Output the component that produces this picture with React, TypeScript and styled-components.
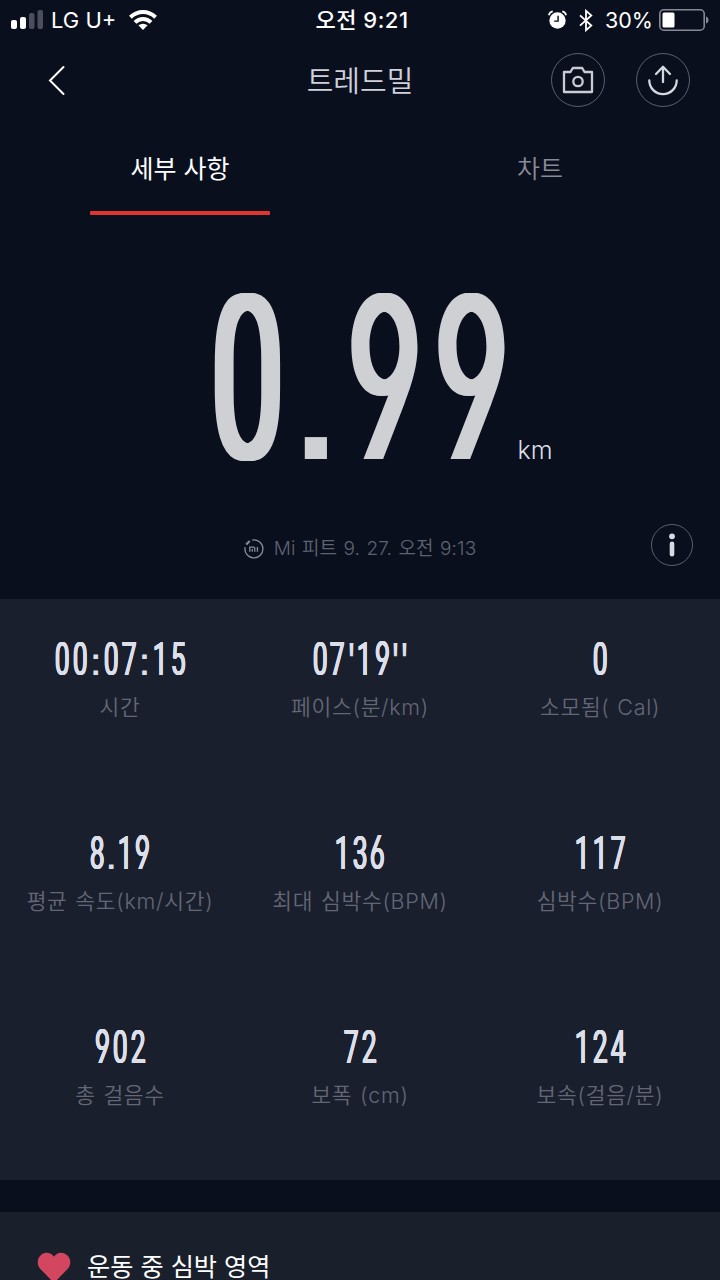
import React from "react";
import styled, { createGlobalStyle, css } from "styled-components";

const GlobalStyle = createGlobalStyle`
  html, body { margin: 0; padding: 0; background: #0a0f1e; }
  * { box-sizing: border-box; }
`;

const sans = `Inter, "Noto Sans CJK KR", sans-serif`;

const Screen = styled.div`
  width: 720px;
  height: 1280px;
  overflow: hidden;
  display: flex;
  flex-direction: column;
  background: #0a0f1e;
  color: #fff;
  font-family: ${sans};
  white-space: nowrap;
`;

const StatusBar = styled.div`
  height: 40px;
  flex: none;
  display: grid;
  grid-template-columns: 1fr auto 1fr;
  align-items: center;
  padding: 0 11px;
`;

const StatusSide = styled.div<{ $end?: boolean }>`
  display: flex;
  align-items: center;
  justify-content: ${(p) => (p.$end ? "flex-end" : "flex-start")};
  gap: ${(p) => (p.$end ? "12px" : "0")};
  line-height: 40px;
`;

const Carrier = styled.span`
  margin: 0 13px 0 7px;
  font-size: 22px;
`;

const Clock = styled.span`
  font-size: 22px;
  font-weight: 550;
  line-height: 38px;
  letter-spacing: 0.5px;
  margin-left: 4px;
`;

const Percent = styled.span`
  margin-right: -6px;
  font-size: 21.5px;
`;

const Header = styled.header`
  height: 80px;
  flex: none;
  display: grid;
  grid-template-columns: 1fr auto 1fr;
  align-items: center;
  padding: 0 30px 0 47px;
`;

const Title = styled.h1`
  margin: 4px 0 0 -17px;
  font-size: 29px;
  font-weight: 350;
  line-height: 40px;
  color: #cfd2dc;
`;

const Actions = styled.div`
  display: flex;
  justify-content: flex-end;
  gap: 31px;
`;

const RoundButton = styled.button<{ $size: number }>`
  width: ${(p) => p.$size}px;
  height: ${(p) => p.$size}px;
  border: 1.5px solid #5b5f6d;
  border-radius: 50%;
  background: none;
  padding: 0;
  display: flex;
  align-items: center;
  justify-content: center;
`;

const Tabs = styled.nav`
  height: 95px;
  flex: none;
  display: grid;
  grid-template-columns: 1fr 1fr;
`;

const Tab = styled.div<{ $active?: boolean }>`
  display: flex;
  flex-direction: column;
  align-items: center;
  justify-content: space-between;
  padding-top: 27px;
  font-size: 25px;
  line-height: 44px;
  font-weight: ${(p) => (p.$active ? 400 : 350)};
  color: ${(p) => (p.$active ? "#fff" : "#888b97")};
  &::after {
    content: "";
    width: 180px;
    height: 4px;
    border-radius: 1px;
    background: ${(p) => (p.$active ? "#df352e" : "transparent")};
  }
`;

const Hero = styled.section`
  height: 384px;
  flex: none;
  display: flex;
  flex-direction: column;
`;

const Distance = styled.div`
  height: 300px;
  display: flex;
  align-items: flex-start;
  padding: 65px 0 0 204px;
`;

const Readout = styled.div<{ $big?: boolean }>`
  display: flex;
  align-items: baseline;
  justify-content: center;
  font-family: Inter, sans-serif;
  font-size: ${(p) => (p.$big ? 225 : 46)}px;
  line-height: ${(p) => (p.$big ? 194 : 48)}px;
  height: ${(p) => (p.$big ? 194 : 48)}px;
  color: ${(p) => (p.$big ? "#cfd0d4" : "#dddfe8")};
  &::before {
    content: "\\200b";
    width: 0;
  }
`;

type GlyphKind = "round" | "open" | "point" | "quote";

const advances: Record<string, number> = { ".": 0.222, ":": 0.29, "'": 0.195 };

const Cell = styled.span<{ $advance: number }>`
  display: flex;
  justify-content: center;
  width: ${(p) => p.$advance}em;
`;

const thicken = (reach: number) =>
  [-1, -0.66, -0.33, 0.33, 0.66, 1]
    .map((k) => `${(k * reach).toFixed(4)}em 0 0 currentColor`)
    .join(", ");

const glyphStyles = {
  round: css`
    font-family: Roboto, sans-serif;
    font-size: 1.02em;
    font-weight: 400;
    transform: scaleX(0.565);
  `,
  open: css`
    font-weight: 400;
    font-feature-settings: "cv03", "cv04";
    transform: scaleX(0.57);
  `,
  point: css`
    font-size: 0.86em;
    font-weight: 400;
    font-feature-settings: "ss07";
  `,
  quote: css`
    font-size: 0.95em;
    font-weight: 700;
    font-feature-settings: "ss08";
    transform: scaleX(0.6);
  `,
};

const Ink = styled.span<{ $kind: GlyphKind; $reach: number }>`
  display: block;
  flex: none;
  text-shadow: ${(p) =>
    p.$kind === "round" || p.$kind === "open" ? thicken(p.$reach) : "none"};
  ${(p) => glyphStyles[p.$kind]}
`;

const kindOf = (c: string): GlyphKind =>
  c === "." || c === ":" ? "point" : c === "'" ? "quote" : c === "9" || c === "6" ? "open" : "round";

const Digits = ({ text, big }: { text: string; big?: boolean }) => (
  <Readout $big={big}>
    {text.split("").map((c, i) => (
      <Cell key={i} $advance={advances[c] ?? 0.386}>
        <Ink $kind={kindOf(c)} $reach={big ? 0.027 : 0.018}>{c}</Ink>
      </Cell>
    ))}
  </Readout>
);

const Unit = styled.span`
  margin: 154px 0 0 3px;
  font-size: 25px;
  line-height: 32px;
  font-weight: 300;
  color: #dcdee6;
`;

const SourceRow = styled.div`
  height: 60px;
  display: grid;
  grid-template-columns: 1fr auto 1fr;
  align-items: center;
  padding: 0 27px;
`;

const Source = styled.div`
  grid-column: 2;
  display: flex;
  align-items: center;
  gap: 10px;
  padding-top: 8px;
  font-size: 19px;
  font-weight: 350;
  line-height: 28px;
  letter-spacing: 0.1px;
  word-spacing: 1px;
  color: #5f6371;
`;

const InfoSlot = styled.div`
  display: flex;
  justify-content: flex-end;
`;

const Stats = styled.section`
  height: 581px;
  flex: none;
  display: grid;
  grid-template-columns: repeat(3, 240px);
  grid-auto-rows: 194px;
  background: #1a1f2e;
`;

const Stat = styled.div`
  display: flex;
  flex-direction: column;
  align-items: center;
  padding-top: 35px;
`;

const StatLabel = styled.span`
  margin-top: 9px;
  font-size: 21.5px;
  font-weight: 350;
  line-height: 32px;
  letter-spacing: 0.7px;
  word-spacing: 1px;
  color: #636775;
`;

const Zone = styled.section`
  margin-top: 32px;
  height: 68px;
  flex: none;
  display: flex;
  align-items: flex-start;
  gap: 16px;
  padding: 42px 0 0 37px;
  background: #1a1f2c;
  font-size: 25.2px;
  font-weight: 400;
  line-height: 26px;
`;

const HeartIcon = styled.svg`
  margin-top: -2px;
  flex: none;
`;

const Signal = () => (
  <svg width="33" height="20" viewBox="0 0 33 20" fill="#fff">
    <rect x="0" y="10" width="6" height="9" rx="2" />
    <rect x="9" y="7" width="6" height="12" rx="2" />
    <rect x="18" y="3" width="5.5" height="16" rx="2" fill="#4b4f5c" />
    <rect x="26.5" y="0" width="5.5" height="19" rx="2" fill="#4b4f5c" />
  </svg>
);

const Wifi = () => (
  <svg width="28" height="20" viewBox="0 0 28 20" fill="none" stroke="#fff" strokeWidth="4">
    <path d="M1.400 7.200Q7 2 14 2t12.600 5.200" />
    <path d="M6 12.400Q9.500 9 14 9t8 3.400" />
    <path d="M14 20l-4.600-4.700Q11.500 13.700 14 13.700t4.600 1.600z" fill="#fff" stroke="none" />
  </svg>
);

const Alarm = () => (
  <svg width="19" height="20" viewBox="0 0 20 20">
    <circle cx="10" cy="10.500" r="8.600" fill="#fff" />
    <path d="M10.600 5.500v5.700H6.500" fill="none" stroke="#0a0f1e" strokeWidth="1.500" />
    <path d="M.9 5C1.400 2.800 2.900 1.300 5 1M19.100 5C18.600 2.800 17.100 1.300 15 1" fill="none" stroke="#fff" strokeWidth="1.800" />
  </svg>
);

const Bluetooth = () => (
  <svg width="14" height="23" viewBox="0 0 14 23" fill="none" stroke="#fff" strokeWidth="1.800">
    <path d="M1 6.300l11.300 10.300L7 21.200V1.800l5.300 4.600L1 16.700" />
  </svg>
);

const Battery = () => (
  <svg width="50" height="22" viewBox="0 0 50 22">
    <rect x=".8" y=".8" width="44.400" height="20.400" rx="4" fill="none" stroke="#858895" strokeWidth="1.600" />
    <rect x="3.500" y="3.500" width="12" height="15" rx="1.500" fill="#fff" />
    <path d="M47 7.500c3.400 1 3.400 6 0 7z" fill="#858895" />
  </svg>
);

const Back = () => (
  <svg width="19" height="32" viewBox="0 0 19 32" fill="none" stroke="#fff" strokeWidth="2" strokeLinecap="round">
    <path d="M16.500 3L3 16.500 16.500 30" />
  </svg>
);

const Camera = () => (
  <svg width="32" height="28" viewBox="0 0 32 28" fill="none" stroke="#c9cbd4" strokeWidth="2.300" strokeLinejoin="round">
    <path d="M2 6h6.500l2.300-4h9.400l2.300 4H30v20H2z" />
    <circle cx="16" cy="15.500" r="4.700" />
  </svg>
);

const Share = () => (
  <svg width="32" height="32" viewBox="0 0 32 32" fill="none" stroke="#d5d7e0" strokeWidth="2.300" strokeLinecap="round" strokeLinejoin="round">
    <path d="M2.300 16.500a13.700 13.700 0 0 0 27.400 0M16 18V3M9 10l7-7.200L23 10" />
  </svg>
);

const Info = () => (
  <svg width="8" height="24" viewBox="0 0 8 24" fill="#d8dae6">
    <circle cx="4" cy="3.300" r="2.900" />
    <rect x="1.700" y="8.500" width="4.600" height="15" rx="2.300" />
  </svg>
);

const MiBadge = () => (
  <svg width="20" height="20" viewBox="0 0 20 20" fill="none" stroke="#8a8d99" strokeWidth="1.300">
    <path d="M8.200 1.100A9 9 0 1 1 1.100 8.200" />
    <path d="M2.200 5.500L5.700 2" strokeWidth="2.200" />
    <path d="M5.800 12.800V8.200h3.600q1.400 0 1.400 1.400v3.200M8.300 10v2.800M13.400 8v4.800" strokeWidth="1.300" />
  </svg>
);

const stats = [
  { value: "00:07:15", label: "시간" },
  { value: "07'19''", label: "페이스(분/km)" },
  { value: "0", label: "소모됨( Cal)" },
  { value: "8.19", label: "평균 속도(km/시간)" },
  { value: "136", label: "최대 심박수(BPM)" },
  { value: "117", label: "심박수(BPM)" },
  { value: "902", label: "총 걸음수" },
  { value: "72", label: "보폭 (cm)" },
  { value: "124", label: "보속(걸음/분)" },
];

export default function App() {
  return (
    <>
      <GlobalStyle />
      <Screen>
        <StatusBar>
          <StatusSide>
            <Signal />
            <Carrier>LG U+</Carrier>
            <Wifi />
          </StatusSide>
          <Clock>오전 9:21</Clock>
          <StatusSide $end>
            <Alarm />
            <Bluetooth />
            <Percent>30%</Percent>
            <Battery />
          </StatusSide>
        </StatusBar>
        <Header>
          <Back />
          <Title>트레드밀</Title>
          <Actions>
            <RoundButton $size={54} aria-label="카메라"><Camera /></RoundButton>
            <RoundButton $size={54} aria-label="공유"><Share /></RoundButton>
          </Actions>
        </Header>
        <Tabs>
          <Tab $active>세부 사항</Tab>
          <Tab>차트</Tab>
        </Tabs>
        <Hero>
          <Distance>
            <Digits text="0.99" big />
            <Unit>km</Unit>
          </Distance>
          <SourceRow>
            <Source>
              <MiBadge />
              <span>Mi 피트 9. 27. 오전 9:13</span>
            </Source>
            <InfoSlot>
              <RoundButton $size={42} aria-label="정보"><Info /></RoundButton>
            </InfoSlot>
          </SourceRow>
        </Hero>
        <Stats>
          {stats.map((s) => (
            <Stat key={s.label}>
              <Digits text={s.value} />
              <StatLabel>{s.label}</StatLabel>
            </Stat>
          ))}
        </Stats>
        <Zone>
          <HeartIcon width="34" height="32" viewBox="0 0 34 32" fill="#d3465f">
            <path d="M17 31L3.600 17.200C-.8 12.500.2 5.800 4.300 2.700 8.500-.5 14 .6 17 4.800 20-.0 25.500-.5 29.700 2.700c4.100 3.100 5.100 9.800.7 14.500z" />
          </HeartIcon>
          <span>운동 중 심박 영역</span>
        </Zone>
      </Screen>
    </>
  );
}
